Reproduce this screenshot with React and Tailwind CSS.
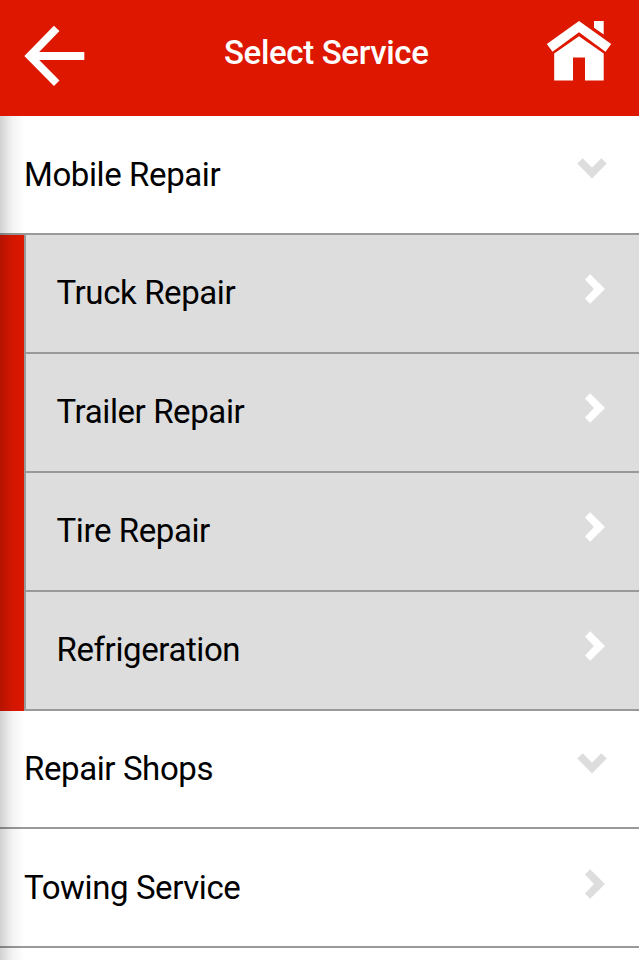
import { useState } from "react";

const SERVICES = [
  {
    name: "Mobile Repair",
    children: ["Truck Repair", "Trailer Repair", "Tire Repair", "Refrigeration"],
  },
  { name: "Repair Shops", children: ["Truck Shops", "Trailer Shops"] },
  { name: "Towing Service" },
];

function BackIcon() {
  return (
    <svg width="62" height="62" viewBox="0 0 62 62" fill="none" stroke="#fff" strokeWidth="8">
      <path d="M32.7 3.4 L5.8 31 L32.7 58.2" strokeWidth="7.8" />
      <path d="M9 31 H60.3" />
    </svg>
  );
}

function HomeIcon() {
  return (
    <svg width="66" height="62" viewBox="0 0 66 62" fill="#fff">
      <path d="M33 0 L65.2 23 L59.5 30.7 L33 11.2 L6.5 30.7 L0.8 23 Z" />
      <path d="M48 0 H57.7 V13.6 L48 6.8 Z" />
      <path d="M33 15.3 L57.7 32.5 V59.6 H39 V36.5 H27 V59.6 H8.2 V32.5 Z" />
    </svg>
  );
}

function ChevronRight({ className }) {
  return (
    <svg className={className} width="20" height="30" viewBox="0 0 20 30" fill="currentColor">
      <path d="M5.2 0.3 L20 15 L5.2 29.7 L0 24.6 L8.9 15 L0 5.4 Z" />
    </svg>
  );
}

function ChevronDown({ className }) {
  return (
    <svg className={className} width="30" height="21" viewBox="0 0 30 21" fill="currentColor">
      <path d="M0.2 5.4 L15 20.4 L29.8 5.4 L24.4 0.2 L15 9.4 L5.6 0.2 Z" />
    </svg>
  );
}

export default function App() {
  const [open, setOpen] = useState("Mobile Repair");

  return (
    <div className="h-[960px] w-full overflow-hidden bg-white pr-px font-[Roboto,sans-serif] text-black">
      {/* Header */}
      <header className="flex h-[116.4px] items-start justify-between bg-[#dd1700] pl-6 pr-[27.5px]">
        <button className="mt-[25px]" aria-label="Back">
          <BackIcon />
        </button>
        <h1 className="mt-[29px] pl-[21px] text-[33px] leading-12 font-medium tracking-[-0.35px] text-white">
          Select Service
        </h1>
        <button className="mt-[21px]" aria-label="Home">
          <HomeIcon />
        </button>
      </header>

      {/* Service list */}
      <main className="relative h-[843.6px]">
        {SERVICES.map((service) => (
          <section key={service.name}>
            <button
              onClick={() => setOpen(open === service.name ? null : service.name)}
              className="flex h-[118.85px] w-full items-center justify-between border-b-2 border-[#999] pl-6 pr-[33px] text-left text-[33px] tracking-[-0.4px]"
            >
              <span className="pb-px">{service.name}</span>
              {service.children ? (
                <ChevronDown className="-mr-px mb-3 text-[#dddddd]" />
              ) : (
                <ChevronRight className="mb-[7px] mr-px text-[#dddddd]" />
              )}
            </button>
            {service.children && open === service.name && (
              <ul className="bg-[#dd1700] pl-6">
                {service.children.map((child) => (
                  <li
                    key={child}
                    className="flex h-[118.85px] items-center justify-between border-b-2 border-l-2 border-[#999] bg-[#dddddd] pl-[30.5px] pr-[34px] text-[33px] tracking-[-0.4px]"
                  >
                    <span className="pb-px">{child}</span>
                    <ChevronRight className="mb-[9px] text-white" />
                  </li>
                ))}
              </ul>
            )}
          </section>
        ))}
        {/* Edge shadow */}
        <div className="pointer-events-none absolute inset-y-0 left-0 w-6 bg-linear-to-r from-black/18 via-black/5 to-transparent" />
      </main>
    </div>
  );
}
